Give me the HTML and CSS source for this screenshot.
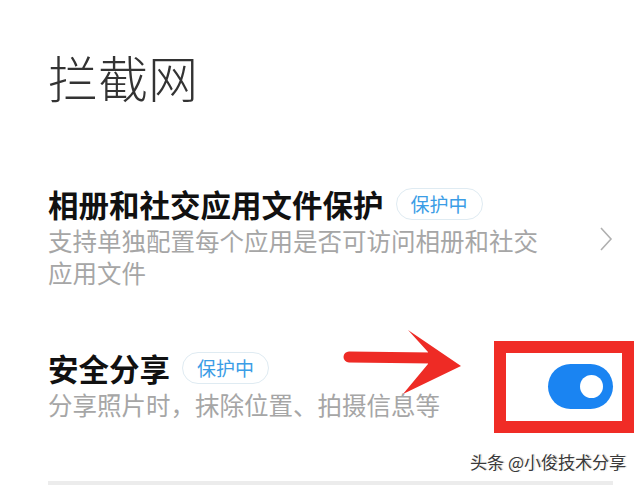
FILE: index.html
```html
<!DOCTYPE html>
<html lang="zh-CN">
<head>
<meta charset="utf-8">
<link rel="stylesheet" href="styles.css">
</head>
<body>
<div class="page">
  <h1 class="title">拦截网</h1>

  <div class="item item-first">
    <div class="item-text">
      <div class="item-head">
        <span class="item-title">相册和社交应用文件保护</span>
        <span class="badge">保护中</span>
      </div>
      <div class="item-desc">支持单独配置每个应用是否可访问相册和社交应用文件</div>
    </div>
    <svg class="chevron" width="14" height="24" viewBox="0 0 14 24"><path d="M2 1 L12 12 L2 23" fill="none" stroke="#b0b0b0" stroke-width="1.6"/></svg>
  </div>

  <div class="item item-second">
    <div class="item-text">
      <div class="item-head">
        <span class="item-title">安全分享</span>
        <span class="badge">保护中</span>
      </div>
      <div class="item-desc">分享照片时，抹除位置、拍摄信息等</div>
    </div>
    <div class="toggle"><span class="knob"></span></div>
  </div>

  <div class="divider"></div>

  <svg class="arrow" width="130" height="75" viewBox="0 0 130 75">
    <line x1="9" y1="32" x2="92" y2="33" stroke="#ee2b25" stroke-width="11" stroke-linecap="round"/>
    <polygon points="68,5 121,41 63,69 88,39 88,27" fill="#ee2b25"/>
  </svg>
  <div class="redbox"></div>
  <div class="watermark">头条 @小俊技术分享</div>
</div>
</body>
</html>
```
FILE: styles.css
```css
html, body {
  margin: 0;
  padding: 0;
  background: #ffffff;
}
.page {
  position: relative;
  width: 640px;
  height: 488px;
  overflow: hidden;
  font-family: "Noto Sans CJK SC", "Noto Sans", sans-serif;
  padding-left: 48px;
  padding-right: 27px;
  box-sizing: border-box;
}
.title {
  margin: 51px 0 0 0;
  font-size: 50px;
  line-height: 50px;
  font-weight: 300;
  color: #333333;
}
.item {
  display: flex;
  align-items: center;
  justify-content: space-between;
}
.item-first {
  margin-top: 87px;
}
.item-second {
  margin-top: 63px;
}
.item-text {
  display: flex;
  flex-direction: column;
}
.item-head {
  display: flex;
  align-items: center;
  height: 32px;
}
.item-title {
  font-size: 30.5px;
  line-height: 32px;
  font-weight: 700;
  color: #111111;
}
.badge {
  margin-left: 12px;
  height: 32px;
  padding: 0 14px;
  border: 1.5px solid #dfebf2;
  border-radius: 16px;
  box-sizing: border-box;
  font-size: 19px;
  line-height: 29px;
  color: #3b9de6;
}
.item-desc {
  margin-top: 5px;
  width: 500px;
  font-size: 24.5px;
  line-height: 32px;
  color: #a6a6a6;
}
.chevron {
  display: block;
}
.toggle {
  width: 81px;
  height: 45px;
  border-radius: 23px;
  background: #1a84f2;
  display: flex;
  align-items: center;
  justify-content: flex-end;
  padding-right: 10px;
  box-sizing: border-box;
}
.knob {
  width: 23px;
  height: 23px;
  border-radius: 50%;
  background: #ffffff;
}
.divider {
  margin-top: 60px;
  height: 4px;
  background: #ececec;
}
.arrow {
  position: absolute;
  left: 340px;
  top: 325px;
}
.redbox {
  position: absolute;
  left: 494px;
  top: 341px;
  width: 140px;
  height: 92px;
  border: 12px solid #f02c26;
  box-sizing: border-box;
}
.watermark {
  position: absolute;
  right: 14px;
  top: 451px;
  font-size: 17px;
  line-height: 22px;
  color: #3a3a3a;
  text-shadow: 1px 1px 0 #ffffff, -1px -1px 0 #ffffff, 1px 0 1px #999;
}
```
